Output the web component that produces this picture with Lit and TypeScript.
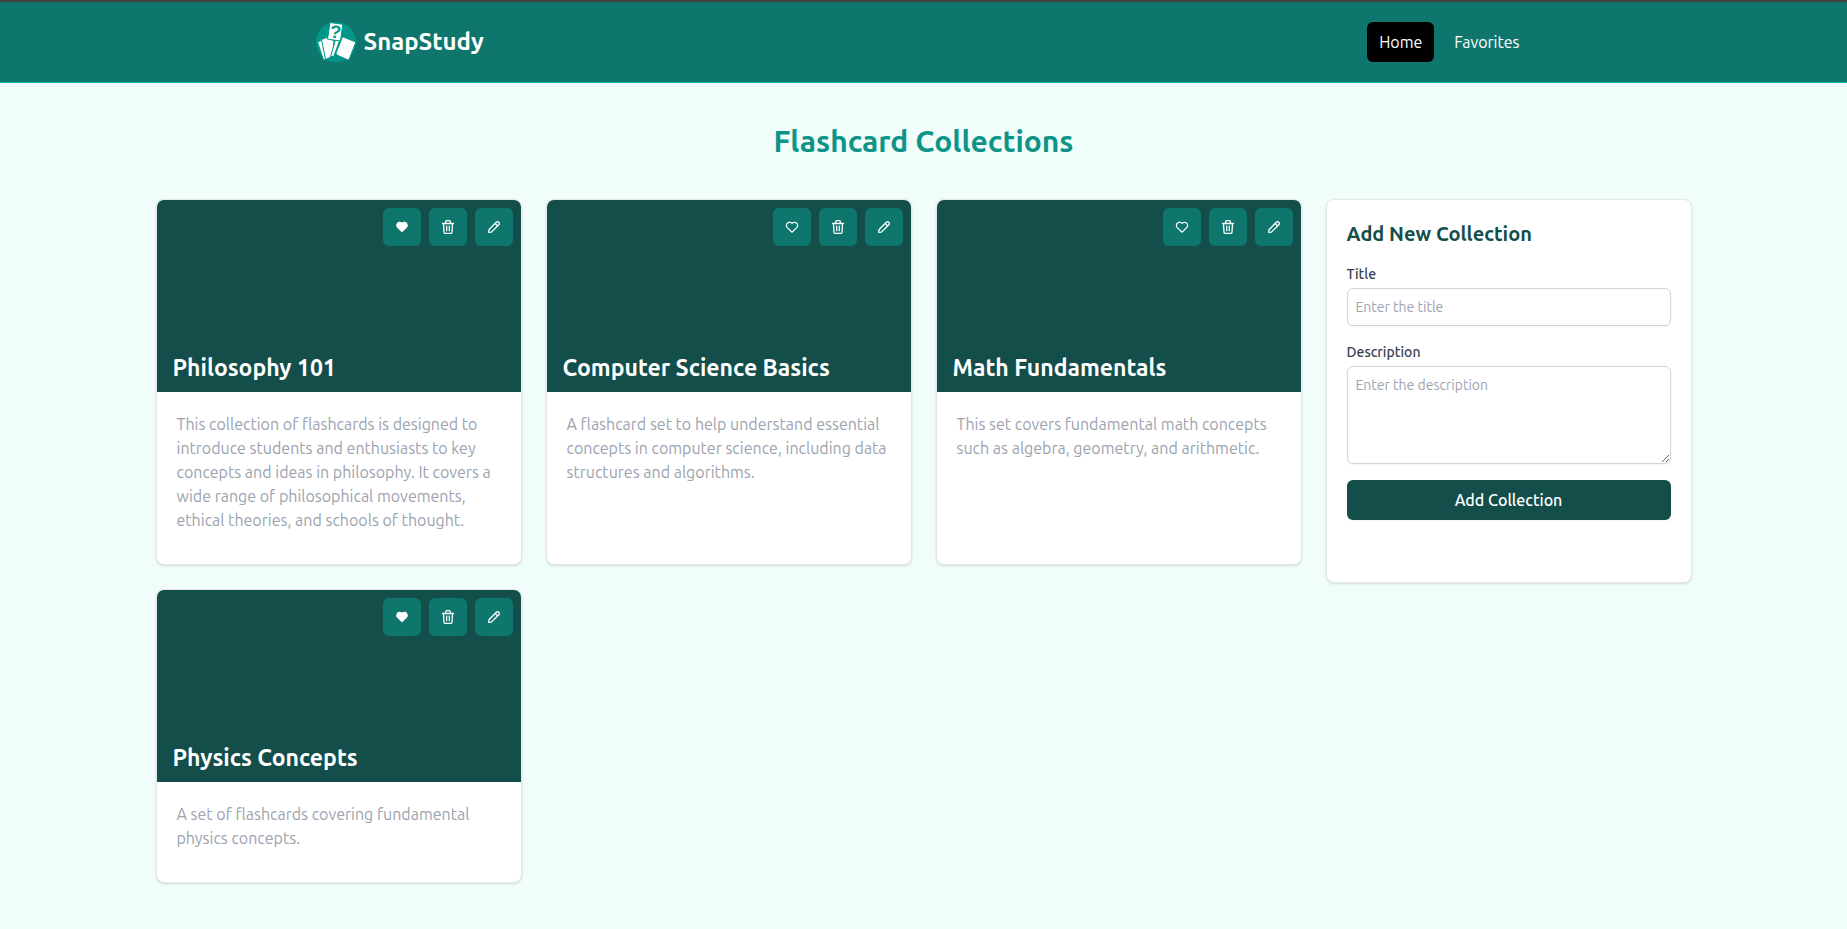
import { LitElement, html, css, svg } from "lit";
import { customElement, property, state } from "lit/decorators.js";

interface Collection {
  id: string;
  title: string;
  description: string;
  favorite: boolean;
}

const baseStyles = css`
  *, *::before, *::after { box-sizing: border-box; }
  h1, h2, h3, p, ul { margin: 0; padding: 0; }
  button, input, textarea { font: inherit; }
  a { color: inherit; text-decoration: none; }
`;

const heartSolid = svg`<path d="M6.979 3.074a6 6 0 0 1 4.988 1.425l.037 .033l.034 -.03a6 6 0 0 1 4.733 -1.44l.246 .036a6 6 0 0 1 3.364 10.008l-.18 .185l-.048 .041l-7.45 7.379a1 1 0 0 1 -1.313 .082l-.094 -.082l-7.493 -7.422a6 6 0 0 1 3.176 -10.215z" />`;

const heartOutline = svg`<path d="M20.500 12.572l-8.500 8.428l-8.500 -8.428a5.300 5.300 0 1 1 8.500 -6.566a5.300 5.300 0 1 1 8.500 6.572" />`;

@customElement("snap-logo")
class SnapLogo extends LitElement {
  static styles = css`
    :host { display: block; width: 40px; height: 40px; }
    svg { display: block; width: 100%; height: 100%; overflow: visible; }
    .disc { fill: #009688; }
    .card { fill: #fff; stroke: #009688; stroke-width: 1; stroke-linejoin: round; }
    .mark { fill: #009688; font: 700 18px "Liberation Sans", Arial, sans-serif; }
  `;
  render() {
    return html`<svg viewBox="0 0 40 40" aria-hidden="true">
      <circle class="disc" cx="20" cy="20" r="20" />
      <path class="card" d="M1.5 20 L6 18 L11 37 L7.500 38 Z" />
      <path class="card" d="M5.5 17.5 L12 15 L18 19 L17 34 L9.5 37.5 Z" />
      <path class="card" d="M20 15.500 L25 14.500 L18 34 L14.500 35 Z" />
      <path class="card" d="M27.500 15 Q26.500 15 26 16 L20 31 Q19.700 32.300 21 33 L31.500 37.800 Q32.800 38 33.300 37 L39.500 21 Q39.800 20 38.500 19.500 Z" />
      <path class="card" d="M14 0.5 L26.8 2.2 L24.5 19 L11.5 17.2 Z" />
      <text class="mark" x="14" y="16" transform="rotate(8 19 10)">?</text>
    </svg>`;
  }
}

@customElement("site-header")
class SiteHeader extends LitElement {
  static styles = [baseStyles, css`
    :host { display: block; background: #0f766e; border-top: 2px solid #424242; border-bottom: 1px solid #14b8a6; }
    .inner { display: flex; align-items: center; justify-content: space-between; max-width: 1280px; height: 80px; margin: 0 auto; padding: 0 32px; }
    .brand { display: flex; align-items: center; gap: 8px; color: #fff; font-size: 24px; line-height: 32px; font-weight: 700; }
    .links { display: flex; gap: 8px; }
    .link { display: block; padding: 8px 12px; border-radius: 6px; color: #fff; font-size: 16px; line-height: 24px; }
    .current { background: #000; }
  `];
  render() {
    return html`<header class="inner">
      <a class="brand" href="#home"><snap-logo></snap-logo><span>SnapStudy</span></a>
      <nav class="links">
        <a class="link current" href="#home" aria-current="page">Home</a>
        <a class="link" href="#favorites">Favorites</a>
      </nav>
    </header>`;
  }
}

@customElement("collection-card")
class CollectionCard extends LitElement {
  @property({ attribute: false }) collection!: Collection;

  static styles = [baseStyles, css`
    :host { display: flex; flex-direction: column; overflow: hidden; background: #fff; border: 1px solid #e5e7eb; border-radius: 8px; box-shadow: 0 1px 3px rgb(0 0 0 / 0.1), 0 1px 2px -1px rgb(0 0 0 / 0.1); }
    .cover { display: flex; flex-direction: column; justify-content: space-between; height: 192px; padding: 8px 8px 8px 16px; background: #134e4a; }
    .actions { display: flex; justify-content: flex-end; gap: 8px; }
    .action { display: grid; place-items: center; width: 38px; height: 38px; padding: 0; border: 0; border-radius: 6px; background: #0f766e; color: #fff; cursor: pointer; }
    .icon { display: block; width: 14px; height: 14px; fill: none; stroke: currentColor; stroke-width: 2; stroke-linecap: round; stroke-linejoin: round; }
    .solid { fill: currentColor; stroke: none; }
    .fine { stroke-width: 1.3; }
    .title { color: #fff; font-size: 23px; line-height: 32px; font-weight: 700; }
    .body { padding: 20px 20px 32px; }
    .text { color: #9ca3af; font-size: 16px; line-height: 24px; }
  `];

  private toggle() {
    this.dispatchEvent(new CustomEvent("toggle-favorite", { detail: this.collection.id }));
  }
  private remove() {
    this.dispatchEvent(new CustomEvent("remove-collection", { detail: this.collection.id }));
  }

  render() {
    const { title, description, favorite } = this.collection;
    return html`
      <div class="cover">
        <div class="actions">
          <button class="action" type="button" aria-label="Favorite" aria-pressed=${favorite} @click=${this.toggle}>
            ${favorite
              ? html`<svg class="icon solid" viewBox="0 0 24 24">${heartSolid}</svg>`
              : html`<svg class="icon" viewBox="0 0 24 24">${heartOutline}</svg>`}
          </button>
          <button class="action" type="button" aria-label="Delete" @click=${this.remove}>
            <svg class="icon fine" viewBox="0 0 14 14"><path d="M1.500 3.500H12.500M2.500 3.500L3 12.300a1 1 0 0 0 1 1H10a1 1 0 0 0 1-1L11.500 3.500M4.700 3.300V1.700a1 1 0 0 1 1-1H8.300a1 1 0 0 1 1 1V3.300M5.700 6.200V10.700M8.300 6.200V10.700" /></svg>
          </button>
          <button class="action" type="button" aria-label="Edit">
            <svg class="icon fine" viewBox="0 0 14 14"><path d="M1.700 12.300L2 9.800L9.300 2.300a1.750 1.750 0 0 1 2.500 2.500L4.300 12.100ZM8.200 3.500L10.600 5.900" /></svg>
          </button>
        </div>
        <h2 class="title">${title}</h2>
      </div>
      <div class="body"><p class="text">${description}</p></div>`;
  }
}

@customElement("collection-form")
class CollectionForm extends LitElement {
  static styles = [baseStyles, css`
    :host { display: block; min-height: 384px; padding: 20px; background: #fff; border: 1px solid #e5e7eb; border-radius: 8px; box-shadow: 0 1px 3px rgb(0 0 0 / 0.1), 0 1px 2px -1px rgb(0 0 0 / 0.1); }
    .form { display: flex; flex-direction: column; gap: 16px; }
    .heading { color: #134e4a; font-size: 20px; line-height: 28px; font-weight: 600; }
    .field { display: flex; flex-direction: column; gap: 4px; }
    .label { color: #374151; font-size: 14px; line-height: 20px; font-weight: 500; }
    .control { display: block; width: 100%; margin: 0; padding: 8px; border: 1px solid #d1d5db; border-radius: 6px; background: #fff; color: #111827; font-size: 14px; line-height: 20px; box-shadow: 0 1px 2px rgb(0 0 0 / 0.05); }
    .single { height: 38px; }
    .control::placeholder { color: #9ca3af; opacity: 1; }
    .submit { padding: 8px 16px; border: 0; border-radius: 6px; background: #134e4a; color: #fff; font-size: 16px; line-height: 24px; font-weight: 500; cursor: pointer; box-shadow: 0 1px 2px rgb(0 0 0 / 0.05); }
  `];

  private submit(event: Event) {
    event.preventDefault();
    const form = event.target as HTMLFormElement;
    const data = new FormData(form);
    this.dispatchEvent(new CustomEvent("add-collection", {
      detail: { title: data.get("title"), description: data.get("description") },
    }));
    form.reset();
  }

  render() {
    return html`<form class="form" @submit=${this.submit}>
      <h2 class="heading">Add New Collection</h2>
      <div class="field">
        <label class="label" for="title">Title</label>
        <input class="control single" id="title" name="title" type="text" placeholder="Enter the title" />
      </div>
      <div class="field">
        <label class="label" for="description">Description</label>
        <textarea class="control" id="description" name="description" rows="4" placeholder="Enter the description"></textarea>
      </div>
      <button class="submit" type="submit">Add Collection</button>
    </form>`;
  }
}

@customElement("app-root")
class AppRoot extends LitElement {
  @state() private collections: Collection[] = [
    { id: "philosophy", title: "Philosophy 101", favorite: true, description: "This collection of flashcards is designed to introduce students and enthusiasts to key concepts and ideas in philosophy. It covers a wide range of philosophical movements, ethical theories, and schools of thought." },
    { id: "cs", title: "Computer Science Basics", favorite: false, description: "A flashcard set to help understand essential concepts in computer science, including data structures and algorithms." },
    { id: "math", title: "Math Fundamentals", favorite: false, description: "This set covers fundamental math concepts such as algebra, geometry, and arithmetic." },
    { id: "physics", title: "Physics Concepts", favorite: true, description: "A set of flashcards covering fundamental physics concepts." },
  ];

  static styles = [baseStyles, css`
    :host { display: block; min-height: 100vh; background: #f0fdfa; font-family: Ubuntu, "Noto Sans", sans-serif; }
    .main { display: flex; flex-direction: column; gap: 40px; max-width: 1536px; margin: 0 auto; padding: 40px 0; }
    .heading { color: #0d9488; font-size: 30px; line-height: 36px; font-weight: 700; text-align: center; }
    .layout { display: grid; grid-template-columns: repeat(4, minmax(0, 1fr)); align-items: start; gap: 24px; }
    .cards { display: grid; grid-column: span 3; grid-template-columns: repeat(3, minmax(0, 1fr)); gap: 24px; }
  `];

  private toggle(event: CustomEvent<string>) {
    this.collections = this.collections.map((c) => (c.id === event.detail ? { ...c, favorite: !c.favorite } : c));
  }
  private remove(event: CustomEvent<string>) {
    this.collections = this.collections.filter((c) => c.id !== event.detail);
  }
  private add(event: CustomEvent<{ title: string; description: string }>) {
    this.collections = [...this.collections, { id: String(Date.now()), favorite: false, ...event.detail }];
  }

  render() {
    return html`
      <site-header></site-header>
      <main class="main">
        <h1 class="heading">Flashcard Collections</h1>
        <div class="layout">
          <section class="cards">
            ${this.collections.map((c) => html`<collection-card .collection=${c} @toggle-favorite=${this.toggle} @remove-collection=${this.remove}></collection-card>`)}
          </section>
          <collection-form @add-collection=${this.add}></collection-form>
        </div>
      </main>`;
  }
}
